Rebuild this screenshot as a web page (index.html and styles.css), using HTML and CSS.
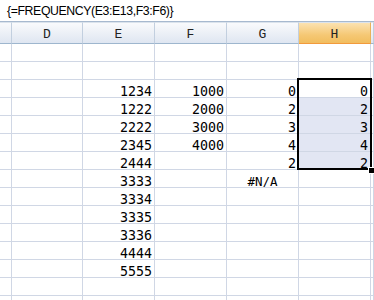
FILE: index.html
```html
<!DOCTYPE html>
<html>
  <head>
    <title>FREQUENCY</title>
    <link rel="stylesheet" href="styles.css">
  </head>
  <body>
    <div class="formula-bar">{=FREQUENCY(E3:E13,F3:F6)}</div>

    <div class="sheet">
      <div class="grid">
        <div class="colhead"></div>
        <div class="colhead">D</div>
        <div class="colhead">E</div>
        <div class="colhead">F</div>
        <div class="colhead">G</div>
        <div class="colhead active">H</div>
        <div class="colhead"></div>
      </div>
      <div class="grid" id="rows"></div>

      <div class="selection"></div>
      <div class="fill-handle"></div>
    </div>

    <script>
      const rows = document.getElementById("rows");
      const e = ["", "", 1234, 1222, 2222, 2345, 2444, 3333, 3334, 3335, 3336, 4444, 5555, "", ""];
      const f = ["", "", 1000, 2000, 3000, 4000];
      const g = ["", "", 0, 2, 3, 4, 2, "#N/A"];
      const h = ["", "", 0, 2, 3, 4, 2];

      for (let i = 0; i < 15; i++) {
        const values = ["", "", e[i], f[i], g[i], h[i], ""];
        values.forEach((v, col) => {
          const cell = document.createElement("div");
          cell.className = "cell";
          if (v === "#N/A") cell.classList.add("error");
          if (col === 5 && i >= 3 && i <= 6) cell.classList.add("selected");
          cell.textContent = v === undefined ? "" : v;
          rows.appendChild(cell);
        });
      }
    </script>
  </body>
</html>
```

FILE: styles.css
```css
html, body {
  margin: 0;
  overflow: hidden;
  background-color: #fff;
}

.formula-bar {
  height: 21px;
  padding-left: 7px;
  border-bottom: 1px solid #a7b9cf;
  font-family: "Liberation Sans", Arial, sans-serif;
  font-size: 12.3px;
  letter-spacing: -0.4px;
  line-height: 22px;
  color: #000;
  white-space: nowrap;
}

.sheet {
  position: relative;
}

.grid {
  display: grid;
  grid-template-columns: 12px 71px 72px 72px 72px 72px 1fr;
}

.colhead {
  box-sizing: border-box;
  height: 22px;
  padding-top: 3px;
  border-top: 1px solid #dbe3ec;
  border-right: 1px solid #c2cfdf;
  border-bottom: 1px solid #9eb6ce;
  background: linear-gradient(#f9fafc, #dfe6f1);
  font-family: "Liberation Mono", "Courier New", monospace;
  font-size: 13px;
  line-height: 18px;
  text-align: center;
  color: #222;
}

.colhead.active {
  background: linear-gradient(#fbe2b1, #f5c874 60%, #f1bd5f);
  border-bottom-color: #f29a3c;
  border-right-color: #e9b15a;
}

.cell {
  box-sizing: border-box;
  height: 18px;
  padding: 3px 2px 0 0;
  border-right: 1px solid #d0d7e5;
  border-bottom: 1px solid #d0d7e5;
  overflow: hidden;
  font-family: "DejaVu Sans Mono", monospace;
  font-size: 13.3px;
  line-height: 17px;
  text-align: right;
  color: #000;
}

.cell.error {
  text-align: center;
  padding-right: 0;
  font-size: 12.5px;
}

.cell.selected {
  background-color: #e2e6f3;
}

.selection {
  position: absolute;
  left: 297px;
  top: 56px;
  width: 75px;
  height: 92px;
  box-sizing: border-box;
  border: 2px solid #000;
}

.fill-handle {
  position: absolute;
  left: 368px;
  top: 145px;
  width: 5px;
  height: 5px;
  background-color: #000;
  border: 1px solid #fff;
}
```
